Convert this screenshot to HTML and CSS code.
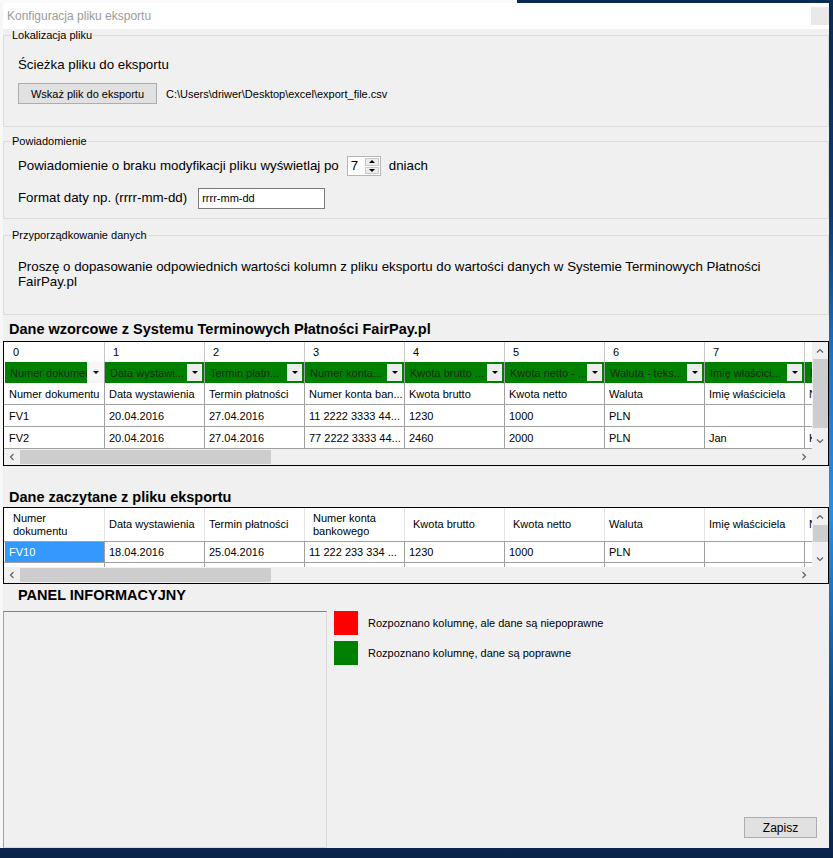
FILE: index.html
```html
<!DOCTYPE html>
<html lang="pl">
<head>
<meta charset="utf-8">
<title>Konfiguracja pliku eksportu</title>
<link rel="stylesheet" href="styles.css">
</head>
<body>
<div class="top-strip"><div class="top-strip-behind"></div></div>
<div class="screen">
  <div class="behind"></div>
  <div class="window">
    <div class="titlebar">
      <span class="title">Konfiguracja pliku eksportu</span>
      <span class="close-btn"></span>
    </div>
    <div class="client">
      <fieldset class="group g1">
        <legend>Lokalizacja pliku</legend>
        <div class="group-body">
          <div class="label label-path">Ścieżka pliku do eksportu</div>
          <div class="path-row">
            <button class="btn btn-browse">Wskaż plik do eksportu</button>
            <span class="path">C:\Users\driwer\Desktop\excel\export_file.csv</span>
          </div>
        </div>
      </fieldset>

      <fieldset class="group g2">
        <legend>Powiadomienie</legend>
        <div class="group-body">
          <div class="form-row row-notify">
            <span class="label">Powiadomienie o braku modyfikacji pliku wyświetlaj po</span>
            <span class="spin">
              <span class="spin-value">7</span>
              <span class="spin-btns">
                <span class="spin-btn"><span class="tri tri-up"></span></span>
                <span class="spin-btn"><span class="tri tri-down"></span></span>
              </span>
            </span>
            <span class="label label-days">dniach</span>
          </div>
          <div class="form-row row-format">
            <span class="label">Format daty np. (rrrr-mm-dd)</span>
            <span class="textbox">rrrr-mm-dd</span>
          </div>
        </div>
      </fieldset>

      <fieldset class="group g3">
        <legend>Przyporządkowanie danych</legend>
        <div class="group-body">
          <p class="para">Proszę o dopasowanie odpowiednich wartości kolumn z pliku eksportu do wartości danych w Systemie Terminowych Płatności<br>FairPay.pl</p>
        </div>
      </fieldset>

      <h2 class="section-title st-1">Dane wzorcowe z Systemu Terminowych Płatności FairPay.pl</h2>
      <div class="grid grid-tpl">
        <div class="grid-body">
          <div class="row row-index">
            <div class="cell">0</div><div class="cell">1</div><div class="cell">2</div><div class="cell">3</div><div class="cell">4</div><div class="cell">5</div><div class="cell">6</div><div class="cell">7</div><div class="cell">8</div>
          </div>
          <div class="row row-map">
            <div class="cell map"><span class="map-text">Numer dokumentu</span><span class="dd dd-active"><span class="tri tri-down"></span></span></div>
            <div class="cell map"><span class="map-text">Data wystawi...</span><span class="dd"><span class="tri tri-down"></span></span></div>
            <div class="cell map"><span class="map-text">Termin płatn...</span><span class="dd"><span class="tri tri-down"></span></span></div>
            <div class="cell map"><span class="map-text">Numer konta...</span><span class="dd"><span class="tri tri-down"></span></span></div>
            <div class="cell map"><span class="map-text">Kwota brutto ...</span><span class="dd"><span class="tri tri-down"></span></span></div>
            <div class="cell map"><span class="map-text">Kwota netto - ...</span><span class="dd"><span class="tri tri-down"></span></span></div>
            <div class="cell map"><span class="map-text">Waluta - teks...</span><span class="dd"><span class="tri tri-down"></span></span></div>
            <div class="cell map"><span class="map-text">Imię właścici...</span><span class="dd"><span class="tri tri-down"></span></span></div>
            <div class="cell map"><span class="map-text">Nazwisko wł...</span><span class="dd"><span class="tri tri-down"></span></span></div>
          </div>
          <div class="row row-data">
            <div class="cell">Numer dokumentu</div><div class="cell">Data wystawienia</div><div class="cell">Termin płatności</div><div class="cell">Numer konta ban...</div><div class="cell">Kwota brutto</div><div class="cell">Kwota netto</div><div class="cell">Waluta</div><div class="cell">Imię właściciela</div><div class="cell">Nazwisko właściciela</div>
          </div>
          <div class="row row-data">
            <div class="cell">FV1</div><div class="cell">20.04.2016</div><div class="cell">27.04.2016</div><div class="cell">11 2222 3333 44...</div><div class="cell">1230</div><div class="cell">1000</div><div class="cell">PLN</div><div class="cell"></div><div class="cell"></div>
          </div>
          <div class="row row-data">
            <div class="cell">FV2</div><div class="cell">20.04.2016</div><div class="cell">27.04.2016</div><div class="cell">77 2222 3333 44...</div><div class="cell">2460</div><div class="cell">2000</div><div class="cell">PLN</div><div class="cell">Jan</div><div class="cell">Kowalski</div>
          </div>
        </div>
        <div class="vscroll">
          <div class="sb-btn"><svg width="8" height="8" viewBox="0 0 8 8"><polyline points="1,5.5 4,2.5 7,5.5" fill="none" stroke="#606060" stroke-width="1.2"/></svg></div>
          <div class="sb-track"><div class="sb-thumb-v"></div></div>
          <div class="sb-btn"><svg width="8" height="8" viewBox="0 0 8 8"><polyline points="1,2.5 4,5.5 7,2.5" fill="none" stroke="#606060" stroke-width="1.2"/></svg></div>
        </div>
        <div class="hscroll">
          <div class="sb-btn-h"><svg width="8" height="8" viewBox="0 0 8 8"><polyline points="5.5,1 2.5,4 5.5,7" fill="none" stroke="#606060" stroke-width="1.2"/></svg></div>
          <div class="sb-track-h"><div class="sb-thumb-h"></div></div>
          <div class="sb-btn-h"><svg width="8" height="8" viewBox="0 0 8 8"><polyline points="2.5,1 5.5,4 2.5,7" fill="none" stroke="#606060" stroke-width="1.2"/></svg></div>
        </div>
        <div class="corner"></div>
      </div>

      <h2 class="section-title st-2">Dane zaczytane z pliku eksportu</h2>
      <div class="grid grid-read">
        <div class="grid-body">
          <div class="row row-head">
            <div class="cell hcell hcell-wide">Numer<br>dokumentu</div>
            <div class="cell hcell">Data wystawienia</div>
            <div class="cell hcell">Termin płatności</div>
            <div class="cell hcell hcell-wide">Numer konta<br>bankowego</div>
            <div class="cell hcell hcell-wide">Kwota brutto</div>
            <div class="cell hcell hcell-wide">Kwota netto</div>
            <div class="cell hcell">Waluta</div>
            <div class="cell hcell">Imię właściciela</div>
            <div class="cell hcell">Nazwisko</div>
          </div>
          <div class="row row-data">
            <div class="cell cell-selected">FV10</div><div class="cell">18.04.2016</div><div class="cell">25.04.2016</div><div class="cell">11 222 233 334 ...</div><div class="cell">1230</div><div class="cell">1000</div><div class="cell">PLN</div><div class="cell"></div><div class="cell"></div>
          </div>
          <div class="row row-data">
            <div class="cell">FV11</div><div class="cell"></div><div class="cell"></div><div class="cell"></div><div class="cell"></div><div class="cell"></div><div class="cell"></div><div class="cell"></div><div class="cell"></div>
          </div>
        </div>
        <div class="vscroll">
          <div class="sb-btn"><svg width="8" height="8" viewBox="0 0 8 8"><polyline points="1,5.5 4,2.5 7,5.5" fill="none" stroke="#606060" stroke-width="1.2"/></svg></div>
          <div class="sb-track"><div class="sb-thumb-v"></div></div>
          <div class="sb-btn"><svg width="8" height="8" viewBox="0 0 8 8"><polyline points="1,2.5 4,5.5 7,2.5" fill="none" stroke="#606060" stroke-width="1.2"/></svg></div>
        </div>
        <div class="hscroll">
          <div class="sb-btn-h"><svg width="8" height="8" viewBox="0 0 8 8"><polyline points="5.5,1 2.5,4 5.5,7" fill="none" stroke="#606060" stroke-width="1.2"/></svg></div>
          <div class="sb-track-h"><div class="sb-thumb-h"></div></div>
          <div class="sb-btn-h"><svg width="8" height="8" viewBox="0 0 8 8"><polyline points="2.5,1 5.5,4 2.5,7" fill="none" stroke="#606060" stroke-width="1.2"/></svg></div>
        </div>
        <div class="corner"></div>
      </div>

      <h2 class="panel-title">PANEL INFORMACYJNY</h2>
      <div class="info-row">
        <div class="info-box"></div>
        <div class="info-side">
          <ul class="legend-list">
            <li class="legend-item"><span class="swatch swatch-red"></span><span>Rozpoznano kolumnę, ale dane są niepoprawne</span></li>
            <li class="legend-item"><span class="swatch swatch-green"></span><span>Rozpoznano kolumnę, dane są poprawne</span></li>
          </ul>
          <button class="btn btn-save">Zapisz</button>
        </div>
      </div>
    </div>
  </div>
</div>
</body>
</html>
```

FILE: styles.css
```css
* { box-sizing: border-box; }
html, body { margin: 0; padding: 0; }
body {
  width: 833px;
  height: 858px;
  overflow: hidden;
  background: linear-gradient(to bottom, #0b2a52 0%, #0d3a70 25%, #1a74cc 42%, #2190ee 60%, #0d4c8e 82%, #0a2448 100%);
  font-family: "Liberation Sans", Arial, sans-serif;
  color: #000;
}
.top-strip { height: 3px; display: flex; }
.top-strip-behind { width: 517px; background: #fafafa; }
.screen { display: flex; height: 845px; }
.behind { width: 3px; background: #f7f7f7; }
.window {
  width: 826px;
  background: #f0f0f0;
  display: flex;
  flex-direction: column;
  overflow: hidden;
}
.titlebar {
  height: 26px;
  flex: none;
  background: #fff;
  display: flex;
  align-items: center;
  justify-content: space-between;
  padding-left: 4px;
}
.title { font-size: 12px; color: #9b9b9b; }
.close-btn { width: 18px; height: 18px; background: #e9e9e9; }
.client { flex: 1; display: flex; flex-direction: column; min-height: 0; }

/* group boxes */
.group {
  margin: 0;
  padding: 0;
  border: 1px solid #dcdcdc;
  min-width: 0;
}
.group legend {
  margin-left: 7px;
  padding: 0 1px;
  font-size: 11px;
  line-height: 13px;
}
.group-body { padding: 0 14px; }
.g1 .group-body { padding-bottom: 22px; }
.g2 { margin-top: 8px; }
.g2 .group-body { padding-bottom: 10px; }
.g3 { margin-top: 10px; }
.g3 .group-body { padding-bottom: 25px; }

.label { font-size: 13.3px; line-height: 16px; }
.label-path { margin-top: 15px; }
.path-row { margin-top: 10px; display: flex; align-items: center; }
.btn {
  font-family: "Liberation Sans", Arial, sans-serif;
  font-size: 11px;
  color: #000;
  background: #e1e1e1;
  border: 1px solid #adadad;
  padding: 0;
  height: 21px;
}
.btn-browse { width: 139px; }
.path { margin-left: 9px; font-size: 11px; }

.form-row { display: flex; align-items: center; height: 20px; }
.row-notify { margin-top: 8px; }
.row-format { margin-top: 12px; }
.spin {
  margin-left: 8px;
  width: 34px;
  height: 20px;
  border: 1px solid #b5b5b5;
  background: #fff;
  display: flex;
}
.spin-value { flex: 1; font-size: 13.3px; line-height: 18px; padding-left: 3px; }
.spin-btns { width: 15px; display: flex; flex-direction: column; gap: 1px; padding: 1px 1px 1px 0; }
.spin-btn {
  flex: 1;
  background: #ececec;
  border: 1px solid #c8c8c8;
  display: flex;
  align-items: center;
  justify-content: center;
}
.label-days { margin-left: 8px; }
.tri { width: 0; height: 0; border-left: 3px solid transparent; border-right: 3px solid transparent; }
.tri-up { border-bottom: 3px solid #000; }
.tri-down { border-top: 3px solid #000; }
.textbox {
  margin-left: 11px;
  width: 127px;
  height: 21px;
  border: 1px solid #7a7a7a;
  background: #fff;
  font-size: 11px;
  line-height: 19px;
  padding-left: 3px;
}
.para { margin: 17px 0 0; font-size: 13.3px; line-height: 15px; }

/* section titles */
.section-title {
  margin: 0;
  padding-left: 6px;
  font-size: 14.5px;
  line-height: 16px;
  font-weight: bold;
}
.st-1 { margin-top: 6px; }
.st-2 { margin-top: 23px; }

/* data grids */
.grid {
  flex: none;
  border: 1px solid #000;
  background: #fff;
  display: grid;
  grid-template-columns: 1fr 16px;
  grid-template-rows: 1fr 16px;
  font-size: 11px;
}
.grid-tpl { margin-top: 4px; height: 125px; }
.grid-read { margin-top: 2px; height: 77px; }
.grid-body { overflow: hidden; min-width: 0; }
.row { display: flex; width: max-content; padding-left: 1px; }
.cell {
  flex: none;
  width: 100px;
  border-right: 1px solid #a0a0a0;
  white-space: nowrap;
  overflow: hidden;
  padding-left: 4px;
  display: flex;
  align-items: center;
}
.row-index { height: 20px; }
.row-index .cell { padding-left: 8px; border-right-color: #c8c8c8; }
.row-map { height: 21px; }
.map { background: #008000; padding-left: 0; }
.map-text { flex: 1; overflow: hidden; padding-left: 5px; color: #1c2b1c; }
.dd {
  flex: none;
  width: 15px;
  height: 17px;
  margin: 0 2px 0 0;
  background: #ececec;
  display: flex;
  align-items: center;
  justify-content: center;
}
.dd-active { width: 17px; height: 21px; margin: 0; background: #f6f6f6; }
.row-data { height: 22px; border-bottom: 1px solid #a0a0a0; }
.row-head { height: 34px; border-bottom: 1px solid #a0a0a0; }
.hcell { border-right-color: #e3e3e3; line-height: 13px; white-space: normal; }
.hcell-wide { padding-left: 8px; }
.grid-read .row-data { height: 21px; }
.cell-selected { background: #3399ff; color: #fff; }

/* scrollbars */
.vscroll { background: #f0f0f0; display: flex; flex-direction: column; }
.sb-btn { height: 17px; flex: none; display: flex; align-items: center; justify-content: center; }
.sb-track { flex: 1; }
.sb-thumb-v { margin-left: 1px; background: #cdcdcd; }
.grid-tpl .sb-thumb-v { height: 69px; }
.grid-read .sb-thumb-v { height: 17px; }
.hscroll { background: #f0f0f0; display: flex; }
.sb-btn-h { width: 16px; flex: none; display: flex; align-items: center; justify-content: center; }
.sb-track-h { flex: 1; padding-top: 1px; }
.sb-thumb-h { width: 251px; height: 14px; background: #cdcdcd; }
.corner { background: #f0f0f0; }

/* info panel */
.panel-title {
  margin: 3px 0 0;
  padding-left: 15px;
  font-size: 14.5px;
  line-height: 16px;
  font-weight: bold;
}
.info-row { flex: 1; display: flex; margin-top: 8px; min-height: 0; }
.info-box {
  width: 324px;
  border-top: 1px solid #828282;
  border-left: 1px solid #a0a0a0;
  border-right: 1px solid #dadada;
  border-bottom: 1px solid #dadada;
}
.info-side {
  flex: 1;
  display: flex;
  flex-direction: column;
  justify-content: space-between;
  padding-left: 7px;
}
.legend-list { list-style: none; margin: 0; padding: 0; display: flex; flex-direction: column; gap: 6px; }
.legend-item { display: flex; align-items: center; gap: 10px; font-size: 11px; }
.swatch { width: 24px; height: 24px; flex: none; }
.swatch-red { background: #ff0000; }
.swatch-green { background: #008000; }
.btn-save { align-self: flex-end; width: 73px; margin: 0 12px 10px 0; font-size: 12px; }
```
